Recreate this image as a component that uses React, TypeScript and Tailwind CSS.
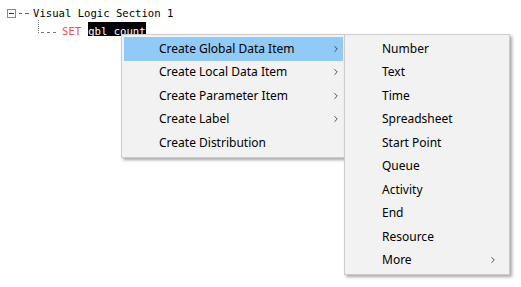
import { ChevronRight } from "lucide-react";

const mainItems = [
  { label: "Create Global Data Item", sub: true, active: true },
  { label: "Create Local Data Item", sub: true },
  { label: "Create Parameter Item", sub: true },
  { label: "Create Label", sub: true },
  { label: "Create Distribution", sub: false },
];

const dataItems = [
  { label: "Number" },
  { label: "Text" },
  { label: "Time" },
  { label: "Spreadsheet" },
  { label: "Start Point" },
  { label: "Queue" },
  { label: "Activity" },
  { label: "End" },
  { label: "Resource" },
  { label: "More", sub: true },
];

function MenuRow({
  label,
  sub,
  active,
  padRight,
}: {
  label: string;
  sub?: boolean;
  active?: boolean;
  padRight: string;
}) {
  return (
    <div
      className={`flex h-[23.5px] items-center pl-[35px] ${padRight} ${
        active ? "bg-[#91c9f7]" : ""
      }`}
    >
      <span className="flex-1 whitespace-nowrap">{label}</span>
      {sub && <ChevronRight size={10} strokeWidth={2} className="text-[#333]" />}
    </div>
  );
}

export default function App() {
  return (
    <div className="relative h-[287px] w-[521px] overflow-hidden bg-white">
      <div className="pt-[6px] pl-[7px] font-['DejaVu_Sans_Mono',monospace] text-[10.6px] leading-[14px] text-black">
        <div className="flex h-[14px] items-center">
          <span className="flex h-[9px] w-[9px] items-center justify-center border border-[#8a8a8a] bg-white">
            <span className="h-px w-[5px] bg-[#333]" />
          </span>
          <span className="ml-[3px] h-px w-[3px] bg-[#666]" />
          <span className="ml-[3px] h-px w-[4px] bg-[#666]" />
          <span className="ml-[4px]">Visual Logic Section 1</span>
        </div>
        <div className="flex h-[17px] items-start pl-[31px]">
          <span className="h-[13px] w-0 border-l border-dotted border-[#777]" />
          <span className="mt-[12px] ml-[2px] h-px w-[3px] bg-[#777]" />
          <span className="mt-[12px] ml-[3px] h-px w-[3px] bg-[#777]" />
          <span className="mt-[12px] ml-[3px] h-px w-[3px] bg-[#777]" />
          <span className="mt-[2px] ml-[6px] h-[14px] leading-[18px] text-[#ff4a4a]">SET</span>
          <span className="mt-[2px] ml-[7px] h-[14px] bg-black leading-[18px] text-white">
            gbl_count
          </span>
        </div>
      </div>

      <div className="absolute top-[34px] left-[121px] w-[225px] border border-[#cccccc] bg-[#f2f2f2] p-[2px] font-['Noto_Sans',sans-serif] text-[12px] text-black shadow-[2px_2px_3px_rgba(0,0,0,0.35)]">
        {mainItems.map((item) => (
          <MenuRow key={item.label} {...item} padRight="pr-[2px]" />
        ))}
      </div>

      <div className="absolute top-[34px] left-[344px] w-[166px] border border-[#cccccc] bg-[#f2f2f2] p-[2px] font-['Noto_Sans',sans-serif] text-[12px] text-black shadow-[2px_2px_3px_rgba(0,0,0,0.35)]">
        {dataItems.map((item) => (
          <MenuRow key={item.label} {...item} padRight="pr-[9px]" />
        ))}
      </div>
    </div>
  );
}
